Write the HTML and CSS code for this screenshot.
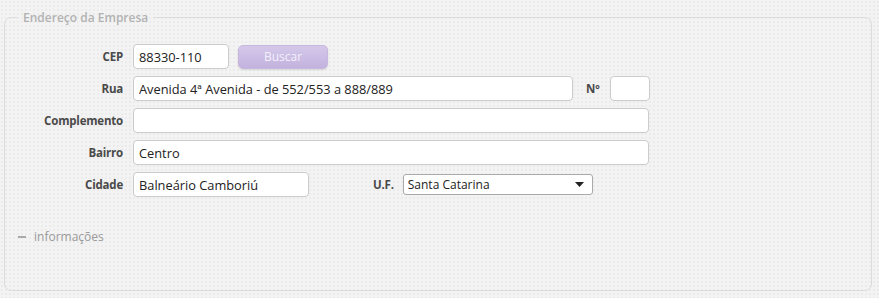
FILE: index.html
```html
<!DOCTYPE html>
<html lang="pt-BR">
<head>
  <meta charset="UTF-8">
  <title>Endereço da Empresa</title>
  <link rel="stylesheet" href="styles.css">
</head>
<body>

<fieldset class="box">
  <legend>Endereço da Empresa</legend>

  <div class="row">
    <label>CEP</label>
    <input type="text" class="cep" value="88330-110">
    <button class="btn">Buscar</button>
  </div>

  <div class="row">
    <label>Rua</label>
    <input type="text" class="rua" value="Avenida 4ª Avenida - de 552/553 a 888/889">
    <label class="inline num-label">Nº</label>
    <input type="text" class="num" value="">
  </div>

  <div class="row">
    <label>Complemento</label>
    <input type="text" class="wide" value="">
  </div>

  <div class="row">
    <label>Bairro</label>
    <input type="text" class="wide" value="Centro">
  </div>

  <div class="row">
    <label>Cidade</label>
    <input type="text" class="cidade" value="Balneário Camboriú">
    <label class="inline uf-label">U.F.</label>
    <div class="select">
      <span>Santa Catarina</span>
      <svg width="9" height="5" viewBox="0 0 9 5"><path d="M0 0h9L4.5 5z" fill="#222"/></svg>
    </div>
  </div>

  <div class="more"><span class="dash"></span>informações</div>
</fieldset>

</body>
</html>
```

FILE: styles.css
```css
body {
  margin: 0;
  background-color: #f3f3f3;
  background-image: radial-gradient(#ebebeb 0.8px, transparent 1px);
  background-size: 4px 4px;
  font-family: "Open Sans", "Noto Sans", sans-serif;
  width: 879px;
  height: 298px;
  overflow: hidden;
}

.box {
  margin: 9px 0 0 4px;
  width: 868px;
  height: 282px;
  box-sizing: border-box;
  border: 1px solid #dcdcdc;
  border-radius: 7px;
  padding: 18px 0 0 0;
}

.box legend {
  margin-left: 13px;
  padding: 0 5px;
  font-size: 12px;
  font-weight: 600;
  color: #b2b2b2;
}

.row {
  display: flex;
  align-items: center;
  height: 25px;
  margin-bottom: 7px;
}

.row label {
  width: 118px;
  margin-right: 10px;
  text-align: right;
  font-size: 11.5px;
  font-weight: 700;
  letter-spacing: -0.2px;
  color: #4a4a4a;
}

.row label.inline {
  width: auto;
  margin-right: 0;
}

input {
  box-sizing: border-box;
  height: 25px;
  border: 1px solid #ccc;
  border-radius: 4px;
  background: #fff;
  font-family: inherit;
  font-size: 12.8px;
  color: #222;
  padding: 0 5px;
  margin: 0;
}

.cep { width: 96px; }
.rua { width: 440px; }
.num { width: 40px; margin-left: 11px; }
.wide { width: 516px; }
.cidade { width: 176px; }

.num-label { margin-left: 13px; }
.uf-label { margin-left: 64px; }

.btn {
  margin-left: 9px;
  width: 90px;
  height: 24px;
  border: 1px solid #c6b8de;
  border-radius: 5px;
  background: linear-gradient(#d4c8ea, #c2b2de);
  box-shadow: 0 1px 2px rgba(0, 0, 0, 0.12);
  color: #f4f0fa;
  font-family: inherit;
  font-size: 12px;
}

.select {
  box-sizing: border-box;
  margin-left: 9px;
  width: 190px;
  height: 21px;
  border: 1px solid #a9a9a9;
  border-radius: 3px;
  background: #fff;
  display: flex;
  align-items: center;
  justify-content: space-between;
  padding: 0 8px 0 4px;
  font-size: 12px;
  color: #222;
}

.more {
  margin: 31px 0 0 13px;
  display: flex;
  align-items: center;
  font-size: 12px;
  color: #9a9a9a;
}

.dash {
  display: inline-block;
  width: 8px;
  height: 2px;
  background: #aaa;
  margin-right: 8px;
}
```
